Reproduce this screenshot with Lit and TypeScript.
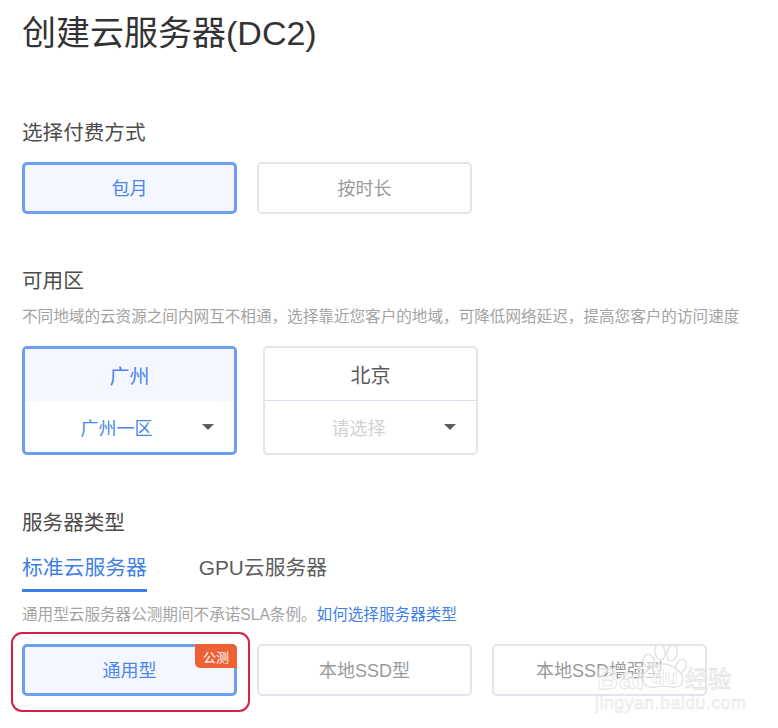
import { LitElement, html, css } from "lit";
import { customElement } from "lit/decorators.js";

@customElement("app-root")
export class AppRoot extends LitElement {
  static styles = css`
    :host {
      display: block;
      width: 778px;
      height: 728px;
      position: relative;
      overflow: hidden;
      background: #fff;
      font-family: "Liberation Sans", "Noto Sans CJK SC", sans-serif;
      color: #333;
    }
    .page { padding: 0 0 0 22px; }
    h1 {
      margin: 0;
      padding-top: 10px;
      height: 47px;
      font-size: 34px;
      line-height: 47px;
      font-weight: 400;
      color: #333;
      white-space: nowrap;
    }
    .label {
      font-size: 20.6px;
      line-height: 28px;
      color: #4d4d4d;
      font-weight: 400;
    }
    .l1 { margin-top: 62px; }
    .l2 { margin-top: 53px; }
    .l3 { margin-top: 54px; }
    .row { display: flex; }
    .r1 { margin-top: 15px; gap: 20px; }
    .r2 { margin-top: 18px; gap: 26px; }
    .r3 { margin-top: 18px; gap: 20px; }
    .btn {
      box-sizing: border-box;
      width: 215px;
      height: 52px;
      padding-bottom: 2px;
      border: 2px solid #e3e4ec;
      border-radius: 5px;
      display: flex;
      align-items: center;
      justify-content: center;
      font-size: 18px;
      color: #9a9a9a;
      position: relative;
    }
    .btn.on {
      border: 3px solid #6d9ff0;
      background: #f4f7ff;
      color: #4a86ec;
    }
    .hint {
      font-size: 15.6px;
      line-height: 22px;
      color: #a3a3a3;
      margin-top: 11px;
      white-space: nowrap;
    }
    .zone {
      box-sizing: border-box;
      width: 215px;
      height: 109px;
      border: 2px solid #e3e4ec;
      border-radius: 5px;
      display: flex;
      flex-direction: column;
    }
    .zone.on { border: 3px solid #6d9ff0; }
    .city {
      height: 53px;
      flex: none;
      display: flex;
      align-items: center;
      justify-content: center;
      font-size: 20px;
      color: #5a5a5a;
      border-bottom: 1px solid #dbe1ec;
      box-sizing: border-box;
    }
    .zone.on .city {
      height: 52px;
      background: #f4f7ff;
      color: #4a86ec;
      border-bottom: none;
    }
    .sel {
      flex: 1;
      display: flex;
      align-items: center;
      justify-content: center;
      position: relative;
      font-size: 18px;
      color: #d2d2d2;
      padding-right: 24px;
    }
    .zone.on .sel { color: #4a86ec; padding-right: 26px; }
    .caret {
      position: absolute;
      right: 20px;
      top: 50%;
      margin-top: -3px;
      width: 0;
      height: 0;
      border-left: 6px solid transparent;
      border-right: 6px solid transparent;
      border-top: 6px solid #5c5c5c;
    }
    .tabs { display: flex; gap: 52px; margin-top: 16px; }
    .tab {
      font-size: 20.8px;
      line-height: 30px;
      height: 39px;
      color: #5d5d5d;
      box-sizing: border-box;
      white-space: nowrap;
    }
    .tab.on { color: #3f7fe8; border-bottom: 3px solid #3f7fe8; }
    .hint.h3 { margin-top: 12px; }
    .hint a { color: #3f7fe8; text-decoration: none; }
    .badge {
      position: absolute;
      top: -3px;
      right: -3px;
      width: 42px;
      height: 24px;
      background: #f06035;
      color: #fff;
      font-size: 13px;
      border-radius: 0 5px 0 5px;
      display: flex;
      align-items: center;
      justify-content: center;
    }
    .ring {
      position: absolute;
      left: 11px;
      top: 632px;
      width: 239px;
      height: 80px;
      box-sizing: border-box;
      border: 2px solid #d3243f;
      border-radius: 11px;
      pointer-events: none;
    }
    .wm {
      position: absolute;
      left: 594px;
      top: 642px;
      width: 176px;
      height: 72px;
      pointer-events: none;
    }
    .wm svg { position: absolute; left: 0; top: 0; }
    .wm span { position: absolute; white-space: nowrap; }
    .wm-bai {
      left: 3px;
      top: 22px;
      font: 700 29px/30px "Liberation Sans", sans-serif;
      letter-spacing: 1px;
      color: rgba(255, 255, 255, 0.55);
      -webkit-text-stroke: 0.8px #e2e2e2;
    }
    .wm-du {
      left: 58px;
      top: 23px;
      font: 700 21px/24px "Liberation Sans", sans-serif;
      color: rgba(255, 255, 255, 0.55);
      -webkit-text-stroke: 0.7px #e2e2e2;
    }
    .wm-jy {
      left: 91px;
      top: 20px;
      font-family: "Noto Sans CJK SC", sans-serif;
      font-size: 23px;
      line-height: 30px;
      color: rgba(255, 255, 255, 0.6);
      -webkit-text-stroke: 0.8px #e2e2e2;
    }
    .wm-url {
      left: 1px;
      top: 50px;
      font: 400 17.5px/22px "Liberation Sans", sans-serif;
      letter-spacing: 0.6px;
      color: rgba(255, 255, 255, 0.6);
      -webkit-text-stroke: 0.6px #e4e4e4;
    }
  `;

  render() {
    return html`
      <div class="page">
        <h1>创建云服务器(DC2)</h1>
        <div class="label l1">选择付费方式</div>
        <div class="row r1">
          <div class="btn on">包月</div>
          <div class="btn">按时长</div>
        </div>
        <div class="label l2">可用区</div>
        <div class="hint">不同地域的云资源之间内网互不相通，选择靠近您客户的地域，可降低网络延迟，提高您客户的访问速度</div>
        <div class="row r2">
          <div class="zone on">
            <div class="city">广州</div>
            <div class="sel">广州一区<span class="caret"></span></div>
          </div>
          <div class="zone">
            <div class="city">北京</div>
            <div class="sel">请选择<span class="caret"></span></div>
          </div>
        </div>
        <div class="label l3">服务器类型</div>
        <div class="tabs">
          <div class="tab on">标准云服务器</div>
          <div class="tab">GPU云服务器</div>
        </div>
        <div class="hint h3">通用型云服务器公测期间不承诺SLA条例。<a>如何选择服务器类型</a></div>
        <div class="row r3">
          <div class="btn on">通用型<span class="badge">公测</span></div>
          <div class="btn">本地SSD型</div>
          <div class="btn">本地SSD增强型</div>
        </div>
      </div>
      <div class="ring"></div>
      <div class="wm">
        <svg width="100" height="60" viewBox="0 0 100 60" fill="rgba(255,255,255,0.55)" stroke="#e2e2e2" stroke-width="1.4">
          <ellipse cx="55" cy="19" rx="5.5" ry="7" transform="rotate(-25 55 19)" />
          <ellipse cx="66" cy="10" rx="5" ry="8" transform="rotate(-10 66 10)" />
          <ellipse cx="78" cy="11" rx="5" ry="8" transform="rotate(12 78 11)" />
          <ellipse cx="87" cy="24" rx="5" ry="7" transform="rotate(28 87 24)" />
          <path d="M49 37c0-8 11-15 20-15s20 8 20 15c0 7-6 9-11 8-5-1-12-1-17 0-6 1-12-1-12-8z" />
        </svg>
        <span class="wm-bai">Bai</span>
        <span class="wm-du">du</span>
        <span class="wm-jy">经验</span>
        <span class="wm-url">jingyan.baidu.com</span>
      </div>
    `;
  }
}
